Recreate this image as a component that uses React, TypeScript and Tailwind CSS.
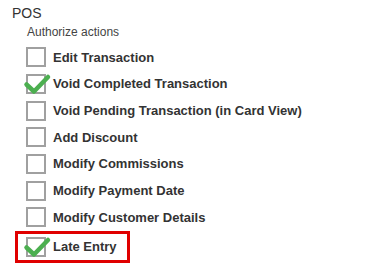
const items = [
  { label: "Edit Transaction", checked: false },
  { label: "Void Completed Transaction", checked: true },
  { label: "Void Pending Transaction (in Card View)", checked: false },
  { label: "Add Discount", checked: false },
  { label: "Modify Commissions", checked: false },
  { label: "Modify Payment Date", checked: false },
  { label: "Modify Customer Details", checked: false },
  { label: "Late Entry", checked: true, highlight: true },
];

function Checkbox({ checked }: { checked: boolean }) {
  return (
    <span className="relative block w-[20px] h-[20px] border-2 border-[#a0a0a0] bg-white shrink-0">
      {checked && (
        <svg className="absolute -left-[6px] -top-[4px] w-[30px] h-[26px]" viewBox="0 0 30 26">
          <path d="M4.5 12.5 L12 19.5 L26 5" fill="none" stroke="#4caf50" strokeWidth="4.5" strokeLinecap="round" strokeLinejoin="round" />
        </svg>
      )}
    </span>
  );
}

export default function App() {
  return (
    <div className="w-[392px] h-[268px] bg-white pt-[5px] pl-[12px] font-['Liberation_Sans',Arial,sans-serif] text-[#333]">
      <div className="text-[14px] leading-[16px]">POS</div>
      <div className="pl-[15px] mt-[4px] text-[12px] leading-[14px] text-[#444]">Authorize actions</div>
      <div className="mt-[5px] flex flex-col">
        {items.map((it) =>
          it.highlight ? (
            <div key={it.label} className="flex items-center gap-[7px] w-[115px] h-[32px] ml-[3px] mt-0 border-[3px] border-[#e00000] pl-[8px]">
              <Checkbox checked={it.checked} />
              <span className="text-[13px] font-bold leading-none">{it.label}</span>
            </div>
          ) : (
            <div key={it.label} className="flex items-center gap-[7px] h-[26.67px] pl-[14px]">
              <Checkbox checked={it.checked} />
              <span className="text-[13px] font-bold leading-none">{it.label}</span>
            </div>
          )
        )}
      </div>
    </div>
  );
}
